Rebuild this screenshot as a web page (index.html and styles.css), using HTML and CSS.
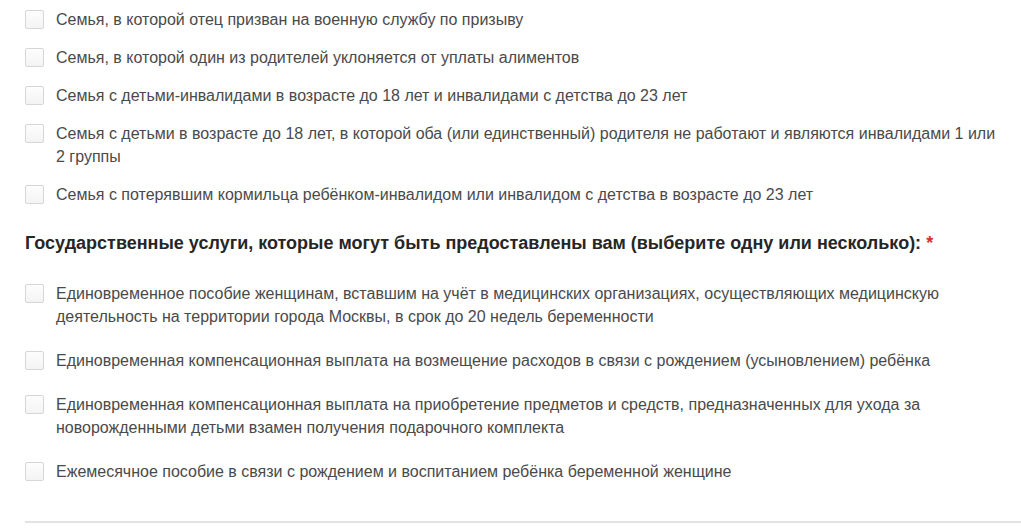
FILE: index.html
```html
<html>
  <head>
    <title>Меры поддержки</title>
    <link rel="stylesheet" href="styles.css">
  </head>
  <body>
    <div class="form">
      <div class="group">
        <label class="option"><span class="box"></span><span class="text">Семья, в которой отец призван на военную службу по призыву</span></label>
        <label class="option"><span class="box"></span><span class="text">Семья, в которой один из родителей уклоняется от уплаты алиментов</span></label>
        <label class="option"><span class="box"></span><span class="text">Семья с детьми-инвалидами в возрасте до 18 лет и инвалидами с детства до 23 лет</span></label>
        <label class="option"><span class="box"></span><span class="text">Семья с детьми в возрасте до 18 лет, в которой оба (или единственный) родителя не работают и являются инвалидами 1 или 2 группы</span></label>
        <label class="option"><span class="box"></span><span class="text">Семья с потерявшим кормильца ребёнком-инвалидом или инвалидом с детства в возрасте до 23 лет</span></label>
      </div>

      <h3 class="question">Государственные услуги, которые могут быть предоставлены вам (выберите одну или несколько): <span class="req">*</span></h3>

      <div class="group services">
        <label class="option"><span class="box"></span><span class="text">Единовременное пособие женщинам, вставшим на учёт в медицинских организациях, осуществляющих медицинскую деятельность на территории города Москвы, в срок до 20 недель беременности</span></label>
        <label class="option"><span class="box"></span><span class="text">Единовременная компенсационная выплата на возмещение расходов в связи с рождением (усыновлением) ребёнка</span></label>
        <label class="option"><span class="box"></span><span class="text">Единовременная компенсационная выплата на приобретение предметов и средств, предназначенных для ухода за новорожденными детьми взамен получения подарочного комплекта</span></label>
        <label class="option"><span class="box"></span><span class="text">Ежемесячное пособие в связи с рождением и воспитанием ребёнка беременной женщине</span></label>
      </div>

      <hr class="divider" />
    </div>
  </body>
</html>
```

FILE: styles.css
```css
body {
  margin: 0;
  background-color: #fff;
  font-family: "Liberation Sans", Arial, sans-serif;
  color: #4a4a4a;
}

.form {
  padding: 8px 0 0 25px;
}

/* Checkbox rows */
.group {
  display: flex;
  flex-direction: column;
  gap: 15px;
  width: 975px;
}
.option {
  display: flex;
  gap: 12px;
  font-size: 16px;
  line-height: 23px;
  cursor: pointer;
}
.box {
  flex: none;
  width: 17px;
  height: 17px;
  margin-top: 2px;
  border: 1px solid #d6d6d6;
  border-radius: 2px;
  background: linear-gradient(#fdfdfd, #f4f4f4);
}
.services {
  gap: 21px;
}

/* Question title */
.question {
  margin: 26px 0 28px;
  font-size: 18px;
  line-height: 22px;
  font-weight: bold;
  color: #262626;
}
.req {
  color: #d0342c;
}

.divider {
  margin: 38px 0 0;
  border: none;
  border-top: 2px solid #e3e3e3;
}
```
